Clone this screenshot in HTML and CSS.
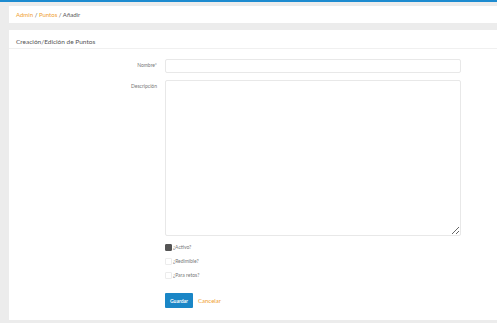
FILE: index.html
```html
<!DOCTYPE html>
<html lang="es">
<head>
  <meta charset="UTF-8" />
  <title>Creación/Edición de Puntos</title>
  <link rel="stylesheet" href="styles.css">
</head>
<body>
  <div class="topbar"></div>

  <div class="content">
    <div class="breadcrumb">
      <a href="#">Admin</a> / <a href="#">Puntos</a> / <span>Añadir</span>
    </div>

    <div class="card">
      <div class="card-header">Creación/Edición de Puntos</div>

      <form class="card-body">
        <div class="row">
          <label class="label" for="nombre">Nombre*</label>
          <input class="field" type="text" id="nombre" />
        </div>

        <div class="row">
          <label class="label" for="descripcion">Descripción</label>
          <textarea class="field area" id="descripcion"></textarea>
        </div>

        <div class="checks">
          <label class="check"><span class="box checked"></span>¿Activo?</label>
          <label class="check"><span class="box"></span>¿Redimible?</label>
          <label class="check"><span class="box"></span>¿Para retos?</label>
        </div>

        <div class="actions">
          <button type="button" class="btn">Guardar</button>
          <a href="#" class="cancel">Cancelar</a>
        </div>
      </form>
    </div>
  </div>
</body>
</html>
```

FILE: styles.css
```css
body {
  margin: 0;
  font-family: Lato, "Open Sans", sans-serif;
  background-color: #ececec;
  color: #555;
  height: 323px;
  overflow: hidden;
}

.topbar {
  height: 2px;
  background-color: #1d8bd0;
}

.content {
  padding: 4px 0 0 9px;
}

.breadcrumb {
  background-color: #fff;
  height: 17px;
  line-height: 17px;
  padding-left: 7px;
  font-size: 6px;
  color: #555;
}

.breadcrumb a {
  color: #f0a030;
  text-decoration: none;
}

.card {
  margin-top: 7px;
  background-color: #fff;
  height: 290px;
}

.card-header {
  height: 18px;
  line-height: 23px;
  padding-left: 7px;
  font-size: 6.5px;
  color: #555;
  border-bottom: 1px solid #f0f0f0;
}

.card-body {
  margin: 0;
  padding-top: 10px;
}

.row {
  display: flex;
  align-items: flex-start;
  margin-bottom: 7px;
}

.label {
  width: 148px;
  text-align: right;
  font-size: 5px;
  color: #777;
  padding-right: 8px;
  line-height: 12px;
}

.field {
  box-sizing: border-box;
  width: 296px;
  height: 14px;
  margin: 0;
  border: 1px solid #e8e8e8;
  border-radius: 2px;
  font: inherit;
}

.area {
  height: 156px;
  resize: both;
}

.checks {
  padding-left: 156px;
  display: flex;
  flex-direction: column;
  gap: 6px;
}

.check {
  display: flex;
  align-items: center;
  font-size: 5px;
  color: #777;
  height: 8px;
}

.box {
  width: 5px;
  height: 5px;
  border: 1px solid #ececec;
  border-radius: 1px;
  margin-right: 1px;
}

.box.checked {
  background-color: #555;
  border-color: #555;
}

.actions {
  padding-left: 156px;
  margin-top: 14px;
  display: flex;
  align-items: center;
  gap: 5px;
}

.btn {
  width: 28px;
  height: 15px;
  padding: 0;
  border: none;
  border-radius: 1px;
  background-color: #1a86c6;
  color: #fff;
  font-family: inherit;
  font-size: 5px;
  font-weight: bold;
}

.cancel {
  color: #f0a030;
  text-decoration: none;
  font-size: 6px;
}
```
